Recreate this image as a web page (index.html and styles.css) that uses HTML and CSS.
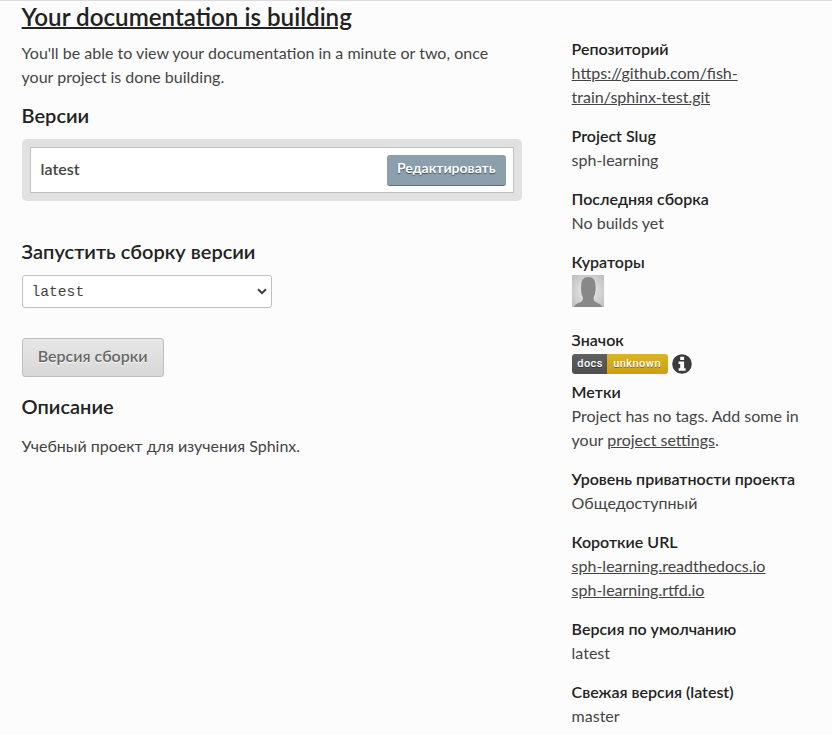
FILE: index.html
```html
<!DOCTYPE html>
<html lang="ru">
<head>
<meta charset="utf-8">
<title>sph-learning</title>
<link rel="stylesheet" href="styles.css">
</head>
<body>
<div class="page">
  <main class="content">
    <h1><a href="#">Your documentation is building</a></h1>
    <p class="intro">You'll be able to view your documentation in a minute or two, once your project is done building.</p>
    <h3 class="versions-title">Версии</h3>
    <div class="module">
      <div class="version">
        <span class="version-name">latest</span>
        <a class="edit" href="#">Редактировать</a>
      </div>
    </div>
    <h3 class="build-title">Запустить сборку версии</h3>
    <div class="select"><span>latest</span>
      <svg width="10" height="7" viewBox="0 0 10 7"><path d="M1 1.2 5 5.2 9 1.2" fill="none" stroke="#3c3c3c" stroke-width="2"/></svg>
    </div>
    <button class="build">Версия сборки</button>
    <h3 class="about-title">Описание</h3>
    <p class="about">Учебный проект для изучения Sphinx.</p>
  </main>
  <aside class="side">
    <section><h4>Репозиторий</h4><p><a href="#">https://github.com/fish-<br>train/sphinx-test.git</a></p></section>
    <section><h4>Project Slug</h4><p>sph-learning</p></section>
    <section><h4>Последняя сборка</h4><p>No builds yet</p></section>
    <section class="curators"><h4>Кураторы</h4>
      <svg class="avatar" width="32" height="32" viewBox="0 0 32 32">
        <defs><radialGradient id="bg" cx=".5" cy=".5" r=".7"><stop offset=".35" stop-color="#dedede"/><stop offset="1" stop-color="#bcbcbc"/></radialGradient></defs>
        <path fill="url(#bg)" d="M0 0h32v32H0z"/>
        <path fill="#888" d="M16.3 2c4.800 0 7.200 3.300 7.200 8.500 0 2 .3 4.500-.3 7.500-.4 2-1.400 3.300-1.700 5 0 3 1.500 4 4.500 5.200 2 .9 3.300 2 4.200 3.800H2c1-2 2.200-3 4.500-3.900 3-1.200 4.500-2.200 4.500-5.100-.3-1.700-1.300-3-1.600-5-.5-3-.3-5.500-.2-7.500C9.300 5.300 11.500 2 16.300 2z"/>
      </svg>
    </section>
    <section class="status"><h4>Значок</h4>
      <div class="badge-row">
        <span class="badge"><span class="badge-key">docs</span><span class="badge-value">unknown</span></span>
        <svg class="info" width="20" height="20" viewBox="0 0 20 20"><circle cx="10" cy="10" r="9.800" fill="#3b3b3b"/><path fill="#fff" d="M8.200 2.800h3.900v3.300H8.200zM6.600 7.600h5.500v6.700h1.500v2.400h-7v-2.400h1.600V10H6.600z"/></svg>
      </div>
    </section>
    <section><h4>Метки</h4><p>Project has no tags. Add some in your <a href="#">project settings</a>.</p></section>
    <section><h4>Уровень приватности проекта</h4><p>Общедоступный</p></section>
    <section><h4>Короткие URL</h4><p><a href="#">sph-learning.readthedocs.io</a><br><a href="#">sph-learning.rtfd.io</a></p></section>
    <section><h4>Версия по умолчанию</h4><p>latest</p></section>
    <section><h4>Свежая версия (latest)</h4><p>master</p></section>
  </aside>
</div>
</body>
</html>
```
FILE: styles.css
```css
* { box-sizing: border-box; }
body {
  margin: 0;
  height: 735px;
  overflow: hidden;
  border-top: 1px solid #dbdadf;
  background: #fcfcfc;
  color: #444;
  font: 16px/24px Lato, sans-serif;
}
h1, h3, h4, p { margin: 0; }
h1, h3, h4 { color: #222; font-weight: 600; }
a { color: inherit; }
.page { display: flex; padding-left: 21.6px; }
.content { width: 500px; margin-right: 50px; }
h1 { font-size: 24.180px; line-height: 32px; }
h1 a { text-decoration-thickness: 2px; }
h3 { font-size: 20px; line-height: 24px; }
.intro { margin-top: 8px; }
.versions-title { margin-top: 14px; }
.module { margin-top: 12px; padding: 8px; background: #e1e1e1; border-radius: 5px; }
.version {
  display: flex;
  align-items: center;
  justify-content: space-between;
  height: 46px;
  padding: 0 7px 0 10px;
  border: 1px solid #bfbfbf;
  background: #fff;
}
.version-name { margin-top: -2px; font-weight: 600; }
.edit {
  height: 31px;
  padding: 0 10px;
  border-bottom: 1px solid #5e6f79;
  border-radius: 3px;
  background: #8c9fad;
  color: #fff;
  font-size: 14px;
  font-weight: 700;
  line-height: 26px;
  text-decoration: none;
  text-shadow: 0 1px 1px #435059;
}
.build-title { margin-top: 38px; }
.select {
  display: flex;
  align-items: center;
  justify-content: space-between;
  width: 250px;
  height: 33px;
  margin-top: 12px;
  padding: 0 4px 0 9px;
  border: 1px solid #bfbfbf;
  border-radius: 3px;
  background: #fff;
  font-family: "Liberation Mono", monospace;
  font-size: 14.600px;
}
.build {
  display: block;
  width: 142px;
  height: 39px;
  margin-top: 30px;
  padding: 0 0 3px;
  border: 1px solid #bfbfbf;
  border-radius: 3px;
  background: linear-gradient(#e6e6e6, #d8d8d8);
  color: #666;
  font: 600 16px/24px Lato, sans-serif;
  text-shadow: 0 1px 0 #fff;
}
.about-title { margin-top: 17px; }
.about { margin-top: 16px; }
.side { width: 232px; padding-top: 36px; }
.side section { margin-bottom: 15px; }
h4 { font-size: 16px; line-height: 24px; }
.avatar { display: block; margin-top: 1px; }
.side .curators { margin-bottom: 21px; }
.side .status { margin-bottom: 5px; }
.badge-row { display: flex; align-items: center; gap: 4px; height: 23px; }
.info { margin-top: 1px; }
.badge {
  display: flex;
  height: 20px;
  overflow: hidden;
  border-radius: 3px;
  color: #fff;
  font: 500 11px/20px Roboto, sans-serif;
  letter-spacing: .45px;
  text-shadow: 0 1px 0 rgba(0, 0, 0, .4);
}
.badge-key { width: 35px; padding-left: 2px; background: linear-gradient(#606060, #4e4e4e); text-align: center; }
.badge-value { width: 61px; background: linear-gradient(#ddb425, #c8a012); text-align: center; }
```
